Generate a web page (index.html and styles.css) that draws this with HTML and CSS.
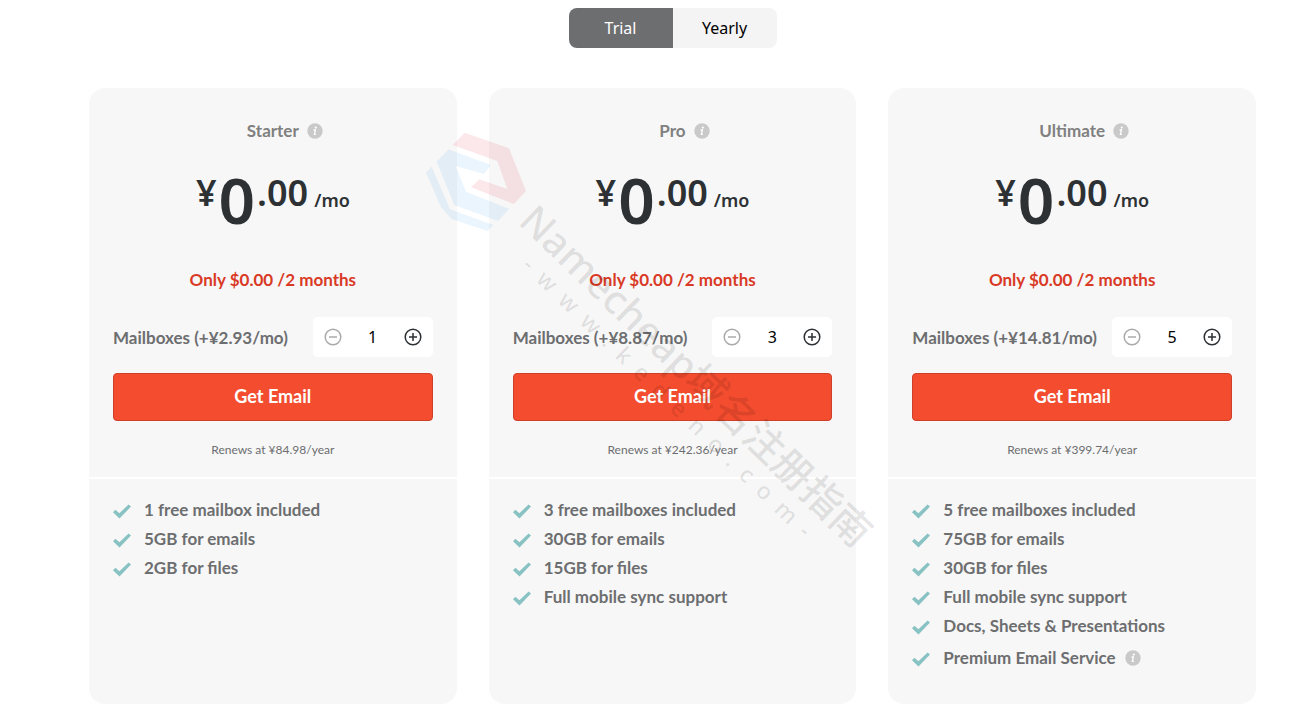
FILE: index.html
```
<!DOCTYPE html>
<html lang="en">
<head>
    <meta charset="UTF-8">
    <meta name="viewport" content="width=device-width, initial-scale=1.0">
    <title>Email Plans</title>
    <link rel="stylesheet" href="styles.css">
</head>
<body>

    <!-- Shared icons -->
    <svg class="icon-defs" aria-hidden="true">
        <symbol id="icon-check" viewBox="0 0 18 15">
            <path d="M0 8.2 2.4 5.8 6.4 9.2 15.6 .4 18 2.6 6.5 14.6z"/>
        </symbol>
        <symbol id="icon-info" viewBox="0 0 16 16">
            <circle cx="8" cy="8" r="7.7" fill="#c9c9c9"/>
            <circle cx="8.8" cy="4.6" r="1.1" fill="#fff"/>
            <path d="M6.6 7h1.8l-1 4.4h1.5" fill="none" stroke="#fff" stroke-width="1.3"/>
        </symbol>
        <symbol id="icon-minus" viewBox="0 0 18 18">
            <circle cx="9" cy="9" r="7.8"/>
            <path d="M5 9h8"/>
        </symbol>
        <symbol id="icon-plus" viewBox="0 0 18 18">
            <circle cx="9" cy="9" r="7.8"/>
            <path d="M5 9h8M9 5v8"/>
        </symbol>
    </svg>

    <!-- Billing period -->
    <div class="period-toggle">
        <button type="button" class="active">Trial</button>
        <button type="button">Yearly</button>
    </div>

    <main class="plans">
        <section class="plan">
            <div class="plan-top">
                <h2>Starter <svg class="info"><use href="#icon-info"/></svg></h2>
                <p class="price"><span class="currency">¥</span><span class="whole">0</span><span class="cents">.00</span><span class="per">/mo</span></p>
                <p class="offer">Only $0.00 /2 months</p>
                <div class="mailboxes">
                    <label for="starter-count">Mailboxes (+¥2.93/mo)</label>
                    <div class="stepper">
                        <button type="button" aria-label="Remove mailbox" disabled><svg><use href="#icon-minus"/></svg></button>
                        <input type="text" id="starter-count" value="1">
                        <button type="button" aria-label="Add mailbox"><svg><use href="#icon-plus"/></svg></button>
                    </div>
                </div>
                <button type="button" class="get-email">Get Email</button>
                <p class="renews">Renews at ¥84.98/year</p>
            </div>
            <ul class="features">
                <li><svg class="check"><use href="#icon-check"/></svg>1 free mailbox included</li>
                <li><svg class="check"><use href="#icon-check"/></svg>5GB for emails</li>
                <li><svg class="check"><use href="#icon-check"/></svg>2GB for files</li>
            </ul>
        </section>

        <section class="plan">
            <div class="plan-top">
                <h2>Pro <svg class="info"><use href="#icon-info"/></svg></h2>
                <p class="price"><span class="currency">¥</span><span class="whole">0</span><span class="cents">.00</span><span class="per">/mo</span></p>
                <p class="offer">Only $0.00 /2 months</p>
                <div class="mailboxes">
                    <label for="pro-count">Mailboxes (+¥8.87/mo)</label>
                    <div class="stepper">
                        <button type="button" aria-label="Remove mailbox" disabled><svg><use href="#icon-minus"/></svg></button>
                        <input type="text" id="pro-count" value="3">
                        <button type="button" aria-label="Add mailbox"><svg><use href="#icon-plus"/></svg></button>
                    </div>
                </div>
                <button type="button" class="get-email">Get Email</button>
                <p class="renews">Renews at ¥242.36/year</p>
            </div>
            <ul class="features">
                <li><svg class="check"><use href="#icon-check"/></svg>3 free mailboxes included</li>
                <li><svg class="check"><use href="#icon-check"/></svg>30GB for emails</li>
                <li><svg class="check"><use href="#icon-check"/></svg>15GB for files</li>
                <li><svg class="check"><use href="#icon-check"/></svg>Full mobile sync support</li>
            </ul>
        </section>

        <section class="plan">
            <div class="plan-top">
                <h2>Ultimate <svg class="info"><use href="#icon-info"/></svg></h2>
                <p class="price"><span class="currency">¥</span><span class="whole">0</span><span class="cents">.00</span><span class="per">/mo</span></p>
                <p class="offer">Only $0.00 /2 months</p>
                <div class="mailboxes">
                    <label for="ultimate-count">Mailboxes (+¥14.81/mo)</label>
                    <div class="stepper">
                        <button type="button" aria-label="Remove mailbox" disabled><svg><use href="#icon-minus"/></svg></button>
                        <input type="text" id="ultimate-count" value="5">
                        <button type="button" aria-label="Add mailbox"><svg><use href="#icon-plus"/></svg></button>
                    </div>
                </div>
                <button type="button" class="get-email">Get Email</button>
                <p class="renews">Renews at ¥399.74/year</p>
            </div>
            <ul class="features">
                <li><svg class="check"><use href="#icon-check"/></svg>5 free mailboxes included</li>
                <li><svg class="check"><use href="#icon-check"/></svg>75GB for emails</li>
                <li><svg class="check"><use href="#icon-check"/></svg>30GB for files</li>
                <li><svg class="check"><use href="#icon-check"/></svg>Full mobile sync support</li>
                <li><svg class="check"><use href="#icon-check"/></svg>Docs, Sheets &amp; Presentations</li>
                <li class="with-info"><svg class="check"><use href="#icon-check"/></svg>Premium Email Service <svg class="info"><use href="#icon-info"/></svg></li>
            </ul>
        </section>

        <!-- Watermark over the cards -->
        <svg class="watermark" viewBox="420 120 470 440">
            <path class="mark-red" d="M464.7 132.7 509 148.3 526 191 514 204 471 187.3 479.3 179.3 507.3 189 497.3 161 452.7 145z"/>
            <path class="mark-blue" d="M448.3 149.3 491 165 484 174 455.7 166 466 191.7 509.3 209 498 221 454.3 205 436.7 161.7z"/>
            <path class="mark-blue" d="M431.7 166.7 450 209.3 493.3 225 487.3 231 451.7 219 441 207.3 426 172.7z"/>
            <text class="mark-title" transform="translate(517 223) rotate(44)">Namecheap域名注册指南</text>
            <text class="mark-url" transform="translate(521 267) rotate(44)">-  w  w  w  .  k  e  d  e  n  o  .  c  o  m  -</text>
        </svg>
    </main>

</body>
</html>
```
FILE: styles.css
```
/* General styles */
* {
    box-sizing: border-box;
}

body {
    margin: 0;
    padding: 8px 59px 16px 89px;
    background-color: #fff;
    color: #6d6e70;
    font-family: 'Lato', sans-serif;
    font-size: 17px;
    font-weight: bold;
}

h2,
p,
ul {
    margin: 0;
    padding: 0;
}

button,
input {
    border: none;
    padding: 0;
    font: inherit;
}

button {
    cursor: pointer;
}

.icon-defs {
    display: none;
}

/* Trial / Yearly switch */
.period-toggle {
    display: flex;
    width: 208px;
    margin: 0 auto 40px;
    border-radius: 8px;
    overflow: hidden;
}

.period-toggle button {
    flex: 1;
    height: 40px;
    background-color: #f4f4f4;
    color: #000;
    font-family: 'Noto Sans', sans-serif;
    font-size: 16px;
    font-weight: normal;
}

.period-toggle .active {
    background-color: #6d6e70;
    color: #fff;
}

/* Plan cards */
.plans {
    position: relative;
    display: grid;
    grid-template-columns: repeat(3, 1fr);
    gap: 32px;
}

.plan {
    background-color: #f7f7f7;
    border-radius: 16px;
}

.plan-top {
    padding: 31px 24px 18px;
    border-bottom: 2px solid #fff;
    text-align: center;
}

.plan h2 {
    display: flex;
    justify-content: center;
    align-items: center;
    gap: 8px;
    color: #808080;
    font-size: 17px;
    line-height: 24px;
}

.info {
    width: 16px;
    height: 16px;
}

/* The icon hangs outside so the name stays centered */
.plan h2 .info {
    margin-right: -24px;
}

/* Price */
.price {
    display: flex;
    justify-content: center;
    gap: 2px;
    margin-top: 25px;
    color: #2d3134;
    font-family: 'Noto Sans', sans-serif;
    font-weight: 600;
    line-height: 64px;
}

.currency,
.cents {
    font-size: 36px;
    line-height: 50px;
}

.whole {
    font-size: 64px;
}

.per {
    margin-left: 4px;
    font-size: 18px;
    line-height: 64px;
}

.offer {
    margin-top: 36px;
    color: #d93a25;
    line-height: 24px;
}

/* Mailbox counter */
.mailboxes {
    display: flex;
    justify-content: space-between;
    align-items: center;
    margin-top: 25px;
}

.stepper {
    display: flex;
    width: 120px;
    height: 40px;
    background-color: #fff;
    border-radius: 5px;
}

.stepper button {
    display: flex;
    flex: 1;
    justify-content: center;
    align-items: center;
    background: none;
    color: #2d3134;
}

.stepper button:disabled {
    color: #aaa;
    cursor: default;
}

.stepper svg {
    width: 18px;
    height: 18px;
    fill: none;
    stroke: currentColor;
    stroke-width: 1.5;
}

.stepper input {
    width: 40px;
    background: none;
    color: #000;
    font-family: 'Noto Sans', sans-serif;
    font-size: 16px;
    font-weight: normal;
    text-align: center;
}

.get-email {
    width: 100%;
    height: 48px;
    margin-top: 16px;
    padding-bottom: 2px;
    background-color: #f34c2e;
    border: 1px solid #cf4028;
    border-radius: 4px;
    color: #fff;
    font-size: 18px;
}

.renews {
    margin-top: 20px;
    font-size: 12px;
    font-weight: normal;
    line-height: 18px;
}

/* Feature list */
.features {
    padding: 16px 24px 32px;
    list-style: none;
    line-height: 29px;
}

.features li {
    display: flex;
    align-items: center;
}

.features .with-info {
    margin-top: 3px;
}

.features .info {
    margin-left: 9px;
}

.check {
    width: 18px;
    height: 15px;
    margin: 4px 13px 0 0;
    fill: #89c2c3;
}

/* Watermark */
.watermark {
    position: absolute;
    top: 32px;
    left: calc(50% - 253px);
    width: 470px;
    height: 440px;
    pointer-events: none;
}

.mark-red {
    fill: #e0202f;
    fill-opacity: .1;
}

.mark-blue {
    fill: #3b9cf0;
    fill-opacity: .1;
}

.watermark text {
    fill: #000;
    fill-opacity: .1;
    font-family: 'Noto Sans', 'Noto Sans CJK SC', sans-serif;
    font-weight: 500;
    white-space: pre;
}

.mark-title {
    font-size: 40px;
}

.mark-url {
    font-size: 23px;
}
```
